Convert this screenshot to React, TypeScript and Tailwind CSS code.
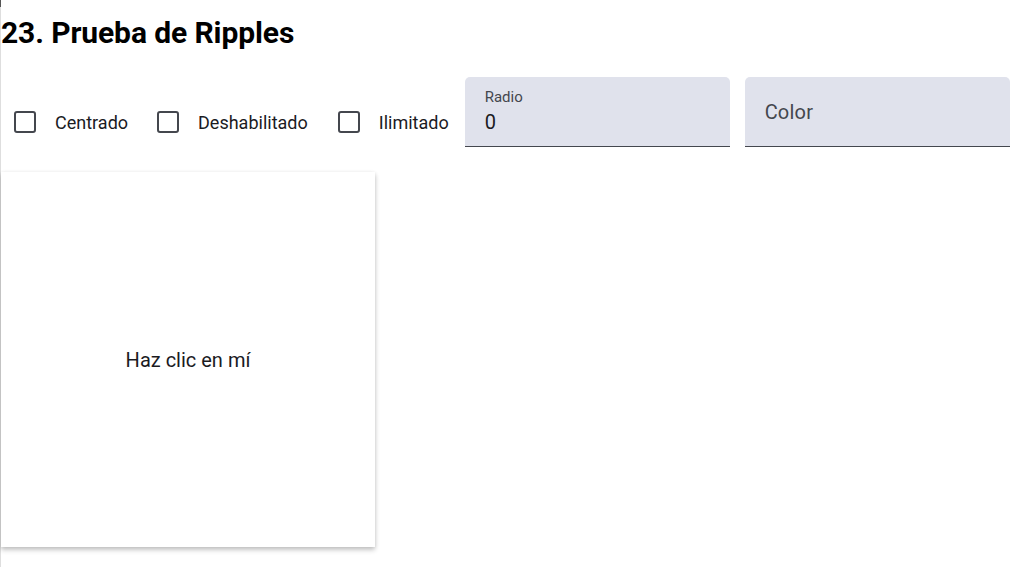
import React from "react";

function Check({ label, className = "" }: { label: string; className?: string }) {
  return (
    <label className={"flex items-center shrink-0 cursor-pointer " + className}>
      <span className="w-[22px] h-[22px] border-[2.5px] border-[#44474e] rounded-[3px] bg-white" />
      <span className="ml-[19px] text-[18px] text-[#1b1b1f]">{label}</span>
    </label>
  );
}

export default function App() {
  return (
    <div className="relative min-h-[567px] border-l border-[#dedede] bg-white font-['Roboto',sans-serif] text-[#1b1b1f]">
      <span className="absolute -left-px top-0 h-[7px] w-px bg-[#555]" />
      <h2 className="pt-[15px] text-[30px] leading-[36px] font-bold text-black tracking-[-0.1px]">23. Prueba de Ripples</h2>
      <div className="mt-[26px] flex items-center">
        <div className="ml-[13px] mt-[20px] flex items-center">
          <Check label="Centrado" />
          <Check label="Deshabilitado" className="ml-[29px]" />
          <Check label="Ilimitado" className="ml-[30px]" />
        </div>
        <div className="ml-[16px] flex gap-[15px]">
          <div className="w-[265px] h-[70px] rounded-t-[5px] bg-[#e0e2ec] border-b-[1.5px] border-[#44474e] px-[20px] pt-[11px]">
            <div className="text-[15px] leading-[18px] text-[#44474e]">Radio</div>
            <div className="mt-[4px] text-[20px] leading-[24px] text-[#1b1b1f]">0</div>
          </div>
          <div className="w-[265px] h-[70px] rounded-t-[5px] bg-[#e0e2ec] border-b-[1.5px] border-[#44474e] px-[20px] flex items-center">
            <span className="text-[20px] text-[#44474e] tracking-[0.2px]">Color</span>
          </div>
        </div>
      </div>
      <div className="mt-[25px] w-[374px] h-[375px] bg-white flex items-center justify-center shadow-[0_3px_5px_rgba(0,0,0,0.2),0_1px_4px_rgba(0,0,0,0.1)]">
        <span className="text-[20px] text-[#1b1b1f]">Haz clic en mí</span>
      </div>
    </div>
  );
}
